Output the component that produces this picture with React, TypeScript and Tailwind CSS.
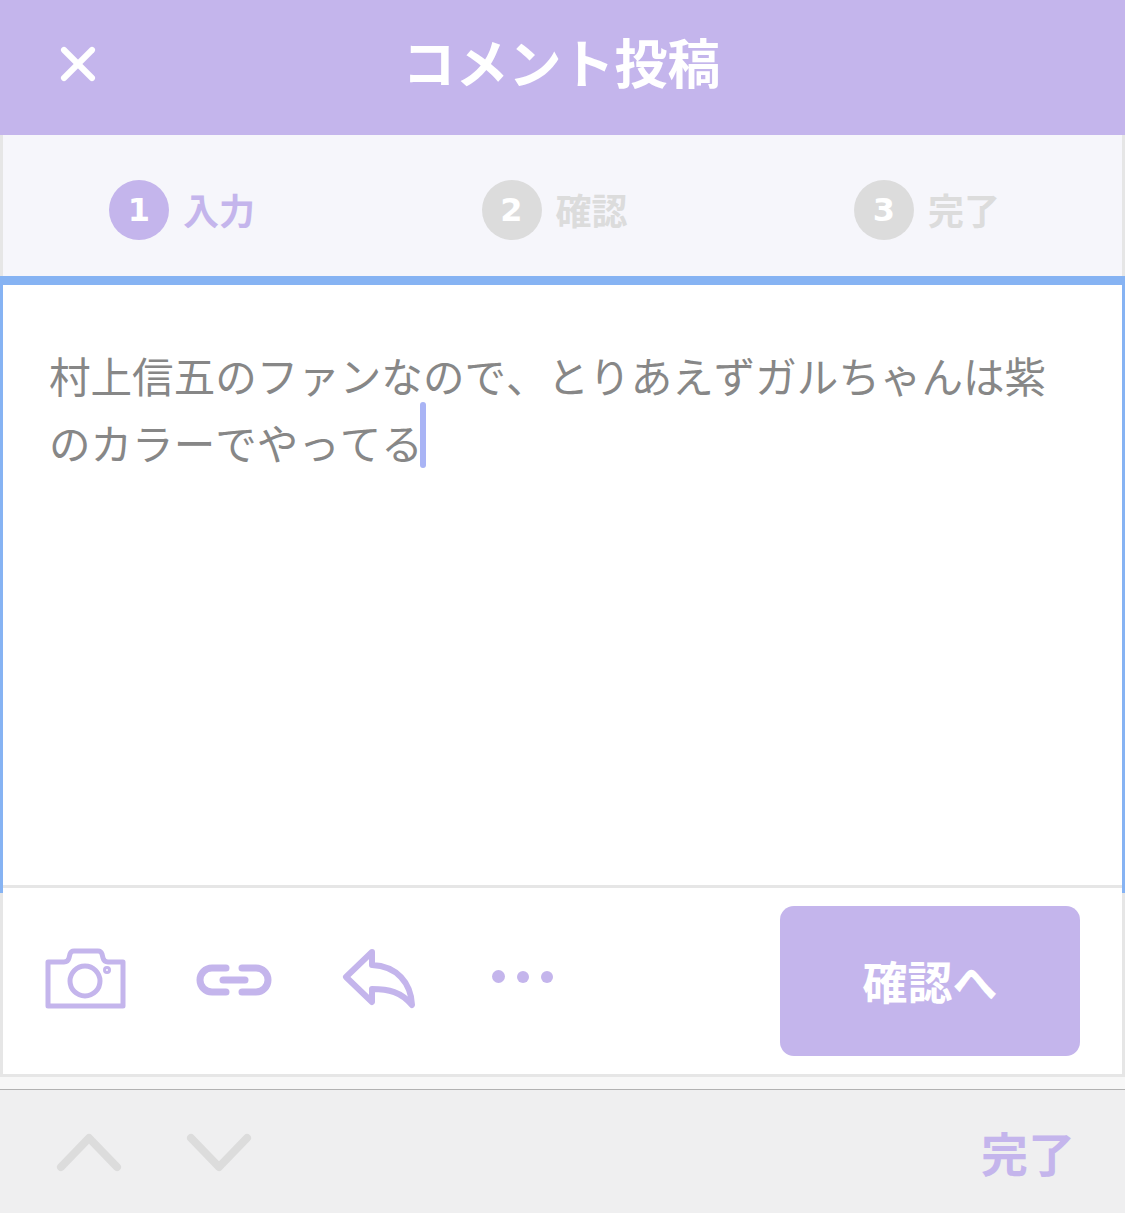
import { X } from "lucide-react";

const FONT = { fontFamily: '"Noto Sans CJK JP", sans-serif' };

const steps = [
  { n: "1", label: "入力", active: true },
  { n: "2", label: "確認", active: false },
  { n: "3", label: "完了", active: false },
];

export default function App() {
  return (
    <div className="w-[1125px] h-[1213px] flex flex-col bg-white overflow-hidden" style={FONT}>
      <div className="h-[135px] bg-[#c4b5ec] flex items-center justify-center relative shrink-0">
        <X size={56} strokeWidth={2.6} className="absolute left-[50px] top-[36px] text-white" />
        <span className="text-white font-bold text-[53px] leading-none mr-[2px] mb-[12px]">コメント投稿</span>
      </div>
      <div className="h-[141px] bg-[#f6f6fb] border-x-[3px] border-[#e6e6e6] flex shrink-0 pl-[106px] pt-[9px]">
        {steps.map((s) => (
          <div key={s.n} className="w-[372.5px] shrink-0 flex items-center gap-[14px]">
            <div
              className={`w-[60px] h-[60px] rounded-full flex items-center justify-center text-white font-bold text-[32px] ${s.active ? "bg-[#c4b5ec]" : "bg-[#dcdcdc]"}`}
              style={{ fontFamily: '"DejaVu Sans", sans-serif' }}
            >
              {s.n}
            </div>
            <span className={`font-bold text-[36px] mb-[2px] ${s.active ? "text-[#c4b5ec]" : "text-[#dcdcdc]"}`}>{s.label}</span>
          </div>
        ))}
      </div>
      <div className="h-[609px] border-[3px] border-t-[9px] border-b-0 border-[#86b3f3] pl-[46px] pr-[30px] pt-[57px] shrink-0">
        <p className="text-[#878787] text-[41.55px] leading-[67px] [font-kerning:none]">
          村上信五のファンなので、とりあえずガルちゃんは紫
          <br />
          のカラーでやってる
          <span className="inline-block w-[6px] h-[66px] bg-[#a9b4f5] rounded-full align-top relative -top-[7px] -ml-[3px]" />
        </p>
      </div>
      <div className="h-[192px] border-[3px] border-[#e6e6e6] flex items-center shrink-0 relative">
        {/* editor's blue edge runs a little past the divider */}
        <div className="absolute -left-[3px] -top-[3px] w-[3px] h-[8px] bg-[#86b3f3]" />
        <div className="absolute -right-[3px] -top-[3px] w-[3px] h-[8px] bg-[#86b3f3]" />
        <svg className="absolute left-[42px] top-[60px]" width="82" height="62" viewBox="0 0 82 62" fill="none" stroke="#c4b5ec" strokeWidth="5" strokeLinejoin="round">
          <path d="M3 14 H19 Q23 14 24 10 L25 6 Q26 3 29 3 H53 Q56 3 57 6 L58 10 Q59 14 63 14 H78 V58 H3 Z" />
          <circle cx="40" cy="33" r="15" />
          <circle cx="62" cy="22" r="1.5" />
        </svg>
        <svg className="absolute left-[191px] top-[74px]" width="80" height="36" viewBox="0 0 80 36" fill="none" stroke="#c4b5ec" strokeWidth="7" strokeLinecap="round">
          <path d="M32 6 H18 A12 12 0 0 0 18 30 H32" />
          <path d="M48 6 H62 A12 12 0 0 1 62 30 H48" />
          <path d="M29 18 H51" />
        </svg>
        <svg className="absolute left-[338px] top-[60px]" width="78" height="62" viewBox="0 0 78 62" fill="none" stroke="#c4b5ec" strokeWidth="6" strokeLinejoin="round">
          <path d="M31 4 L5 29 L31 54 V41 C48 41 60 44 71 57 C70 35 56 18 31 17 Z" />
        </svg>
        <div className="absolute left-[489px] top-[82px] flex items-center gap-[12px]">
          <div className="w-[13px] h-[13px] rounded-full bg-[#c4b5ec]" />
          <div className="w-[12px] h-[12px] rounded-full bg-[#c4b5ec]" />
          <div className="w-[12px] h-[12px] rounded-full bg-[#c4b5ec]" />
        </div>
        <div className="ml-auto mr-[42px] mb-[1px] w-[300px] h-[150px] rounded-[14px] bg-[#c4b5ec] flex items-center justify-center text-white font-bold text-[45px]">
          確認へ
        </div>
      </div>
      <div className="h-[12px] bg-[#f7f7f7] shrink-0" />
      <div className="flex-1 bg-[#efeff0] border-t border-[#b2b2b2] flex items-center pl-[56px] pr-[50px]">
        <svg width="66" height="40" viewBox="0 0 66 40" fill="none" stroke="#dcdcdc" strokeWidth="8" strokeLinecap="round" strokeLinejoin="round">
          <path d="M5 35 L33 6 L61 35" />
        </svg>
        <svg className="ml-[64px]" width="66" height="40" viewBox="0 0 66 40" fill="none" stroke="#dcdcdc" strokeWidth="8" strokeLinecap="round" strokeLinejoin="round">
          <path d="M5 6 L33 35 L61 6" />
        </svg>
        <span className="ml-auto mt-[2px] text-[#c4b5ec] font-bold text-[47px]">完了</span>
      </div>
    </div>
  );
}
